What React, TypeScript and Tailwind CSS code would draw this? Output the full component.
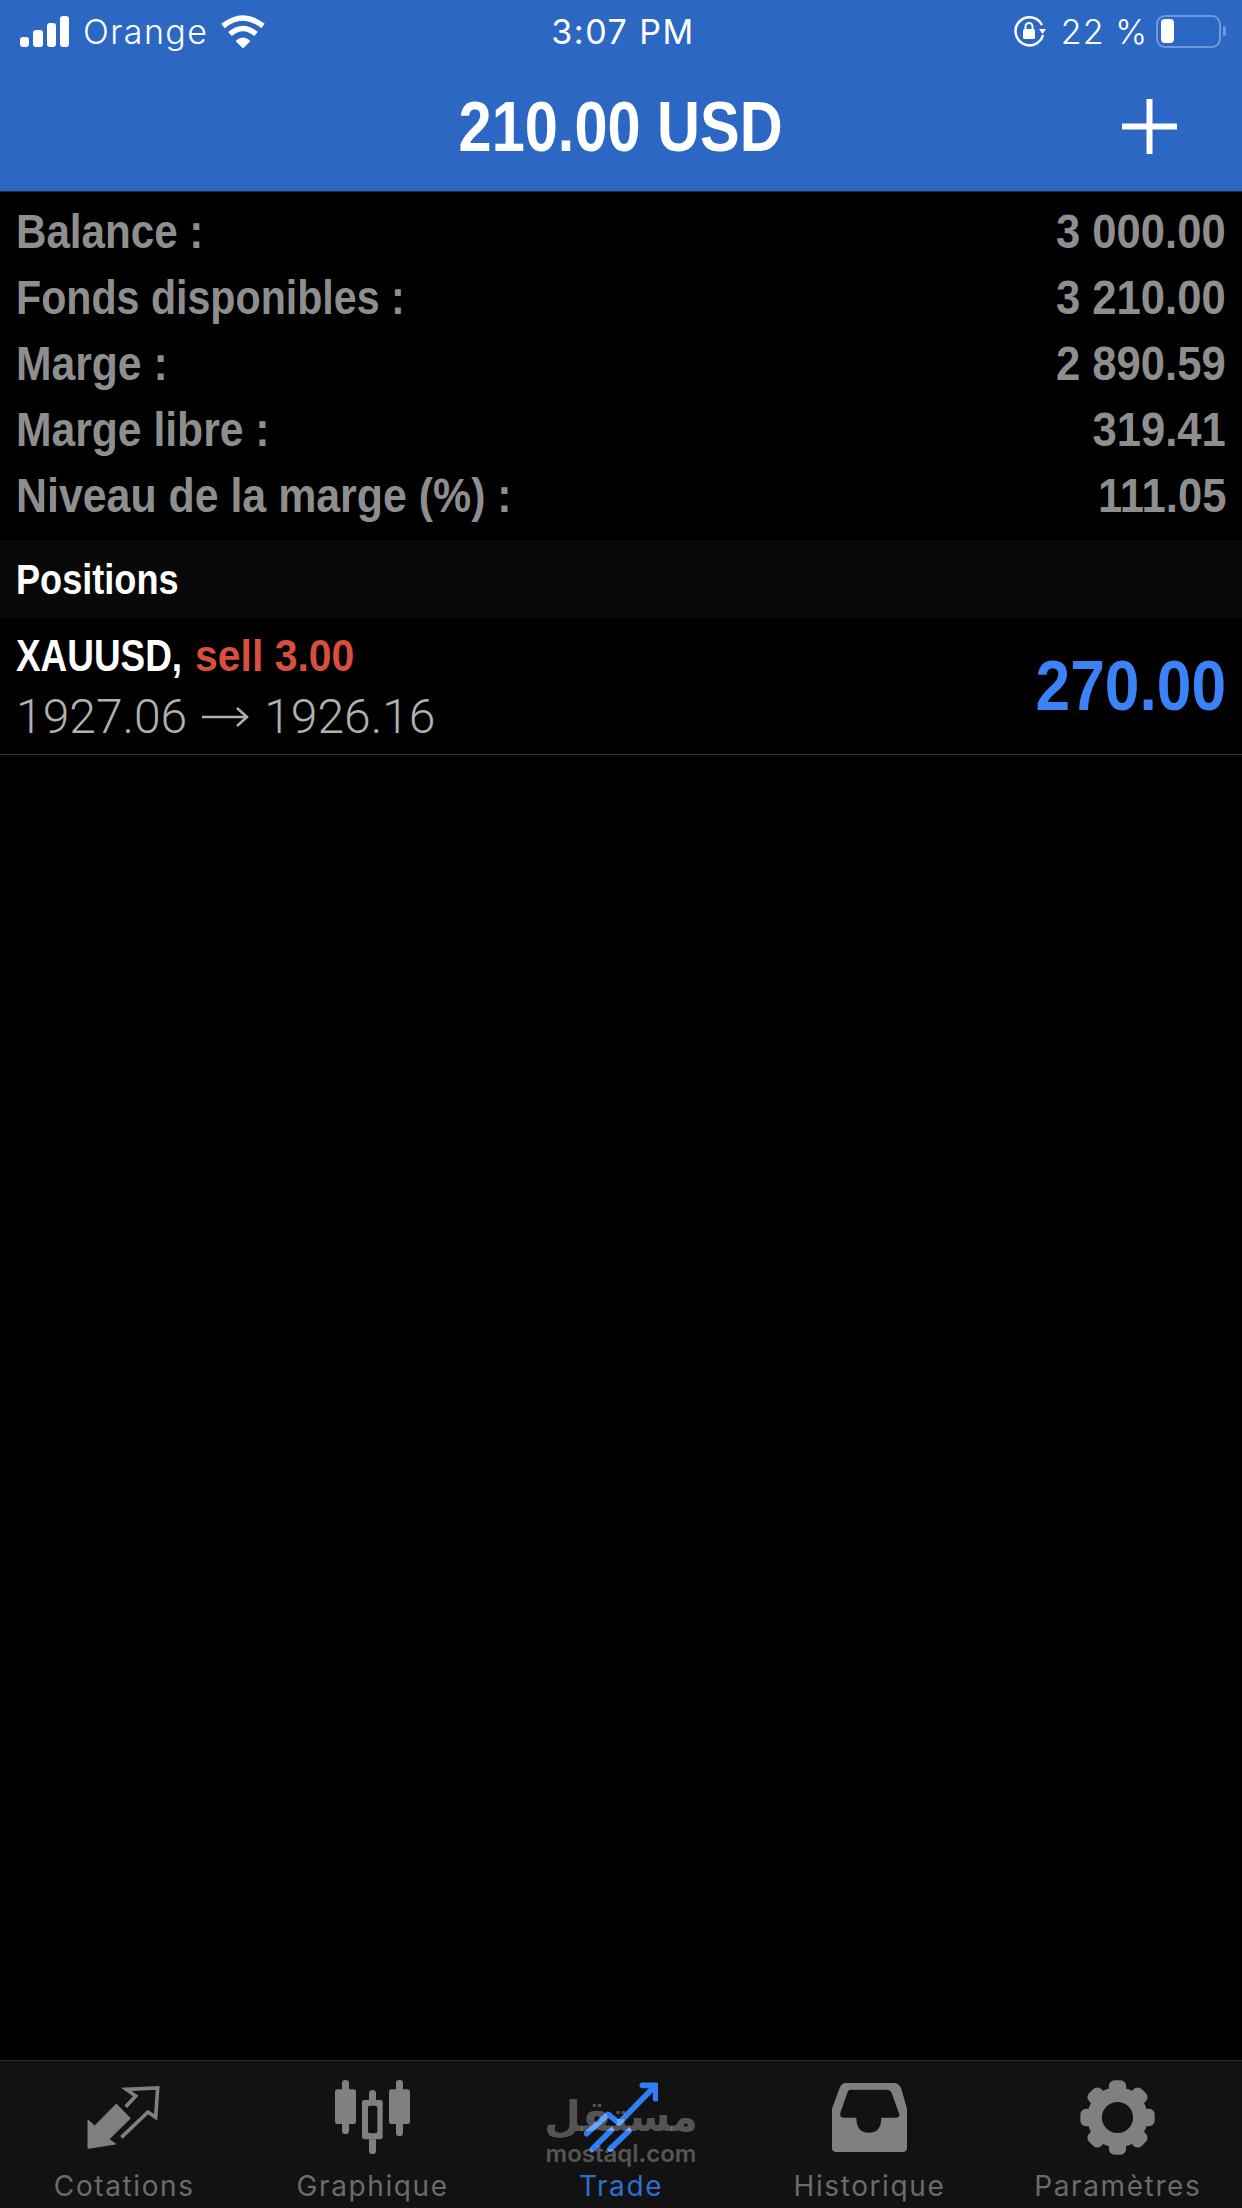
const accountRows = [
  { label: "Balance :", value: "3 000.00", labelClass: "origin-left scale-x-[0.86]" },
  { label: "Fonds disponibles :", value: "3 210.00", labelClass: "origin-left scale-x-[0.84]" },
  { label: "Marge :", value: "2 890.59", labelClass: "origin-left scale-x-[0.87]" },
  { label: "Marge libre :", value: "319.41", labelClass: "origin-left scale-x-[0.87]" },
  { label: "Niveau de la marge (%) :", value: "111.05", labelClass: "origin-left scale-x-[0.875]" },
];

const gearTeeth = [0, 45, 90, 135, 180, 225, 270, 315];

function QuotesIcon() {
  return (
    <svg width="74" height="65" viewBox="262 135 222 195">
      <path d="M265 325V240L285 258L350 192L392 235L328 298L348 312Z" fill="#808080" stroke="#808080" strokeWidth="3" strokeLinejoin="round" />
      <path d="M378 200L408 168L380 148L474 144L468 232L445 216L365 292" fill="none" stroke="#808080" strokeWidth="11" />
    </svg>
  );
}

function ChartIcon() {
  return (
    <svg width="75" height="74" viewBox="1005 120 225 222" fill="#808080">
      <rect x="1026" y="120" width="21" height="162" rx="10" />
      <rect x="1005" y="148" width="63" height="104" rx="7" />
      <rect x="1188" y="120" width="21" height="168" rx="10" />
      <rect x="1167" y="148" width="63" height="104" rx="7" />
      <path d="M1107 180V160Q1107 150 1117.500 150Q1128 150 1128 160V180ZM1107 298H1128V332Q1128 342 1117.500 342Q1107 342 1107 332Z" />
      <path fillRule="evenodd" d="M1093 180H1141Q1148 180 1148 187V291Q1148 298 1141 298H1093Q1086 298 1086 291V187Q1086 180 1093 180ZM1110 197Q1104 197 1104 203V274Q1104 280 1110 280H1126Q1132 280 1132 274V203Q1132 197 1126 197Z" />
    </svg>
  );
}

function TradeIcon() {
  return (
    <svg width="74" height="70" viewBox="310 125 222 210" fill="none" stroke="#2f7ef7" strokeWidth="17" strokeLinecap="round" strokeLinejoin="round">
      <path d="M318 280L382 222L415 248L522 138" />
      <path d="M485 135H525V175" />
      <path d="M335 326L392 270" />
      <path d="M388 326L445 272" />
    </svg>
  );
}

function HistoryIcon() {
  return (
    <svg width="75" height="69" viewBox="210 128 225 207">
      <path
        fill="#808080"
        fillRule="evenodd"
        d="M250 128H395Q412 128 418 145L435 205V322Q435 335 422 335H223Q210 335 210 322V205L232 145Q238 128 250 128ZM265 148Q258 148 255 160L235 218Q232 232 245 232H283Q283 277 320 277Q358 277 358 232H402Q414 232 412 222L390 160Q385 148 375 148Z"
      />
    </svg>
  );
}

function SettingsIcon() {
  return (
    <svg width="75" height="75" viewBox="-113 -113 226 226" fill="#808080">
      <circle r="69" fill="none" stroke="#808080" strokeWidth="44" />
      {gearTeeth.map((deg) => (
        <rect key={deg} x="-26" y="-112" width="52" height="40" rx="17" transform={`rotate(${deg})`} />
      ))}
    </svg>
  );
}

function NavTab({ label, active, children }: { label: string; active?: boolean; children: React.ReactNode }) {
  return (
    <div className="relative flex flex-1 flex-col items-center pt-[16px]">
      <div className="flex h-[80px] items-center justify-center">{children}</div>
      <span
        className={`mt-[11px] text-[28px] leading-[36px] tracking-[1.6px] font-['Inter',sans-serif] ${
          active ? "text-[#2f6fd0]" : "text-[#6b6b6b]"
        }`}
      >
        {label}
      </span>
    </div>
  );
}

export default function App() {
  return (
    <div className="flex h-[2208px] w-[1242px] flex-col overflow-hidden bg-black font-['Liberation_Sans',sans-serif]">
      <header className="h-[192px] border-b border-[#1d2a3f] bg-[#2d67c4] text-white">
        <div className="grid h-[62px] grid-cols-3 items-center pl-[20px] pr-[16px] font-['Inter',sans-serif] text-[34px] font-light">
          <div className="flex items-center">
            <div className="flex h-[32px] items-end gap-[4px]">
              <span className="h-[10px] w-[9px] rounded-[3px] bg-white" />
              <span className="h-[17px] w-[10px] rounded-[3px] bg-white" />
              <span className="h-[24px] w-[9px] rounded-[3px] bg-white" />
              <span className="h-[31px] w-[9px] rounded-[3px] bg-white" />
            </div>
            <span className="ml-[14px] tracking-[1.4px]">Orange</span>
            <svg className="ml-[12px]" width="46" height="34" viewBox="0 0 46 34" fill="none" stroke="white" strokeWidth="5.5">
              <path d="M3 12Q23 -4 43 12" />
              <path d="M10 20Q23 9 36 20" />
              <path d="M17 27Q23 22 29 27L23 33Z" fill="white" stroke="white" strokeWidth="2" strokeLinejoin="round" />
            </svg>
          </div>
          <div className="text-center font-normal tracking-[1.5px]">3:07 PM</div>
          <div className="flex items-center justify-end">
            <svg width="34" height="32" viewBox="0 0 34 32" fill="none">
              <path d="M29 10A14 14 0 1 0 30 20" stroke="white" strokeWidth="2.5" />
              <path d="M26 14H33L29.5 19Z" fill="white" />
              <rect x="10" y="14" width="12" height="10" rx="1.5" fill="white" />
              <path d="M12.5 14V11.5A3.5 3.5 0 0 1 19.500 11.5V14" stroke="white" strokeWidth="2" />
            </svg>
            <span className="ml-[14px] tracking-[1px] whitespace-nowrap">22 %</span>
            <div className="ml-[8px] flex h-[33px] w-[65px] items-center rounded-[9px] border-2 border-[#6f98da] p-[3px]">
              <span className="h-[24px] w-[13px] rounded-[4px] bg-white" />
            </div>
            <span className="ml-[2px] h-[10px] w-[3px] rounded-r-[2px] bg-[#6f98da]" />
          </div>
        </div>
        <div className="grid h-[129px] grid-cols-[1fr_auto_1fr] items-center">
          <div />
          <h1 className="scale-x-[0.85] text-[70px] leading-none font-bold">210.00 USD</h1>
          <div className="flex justify-end pr-[65px]">
            <svg width="55" height="55" viewBox="0 0 55 55" fill="white">
              <rect x="24.5" width="6" height="55" />
              <rect y="24.5" width="55" height="6" />
            </svg>
          </div>
        </div>
      </header>

      <section className="pt-[7px] pb-[11px]">
        {accountRows.map((row) => (
          <div key={row.label} className="flex h-[66px] items-center justify-between px-[16px] text-[49px] font-bold text-[#8e8e8e]">
            <span className={row.labelClass}>{row.label}</span>
            <span className="origin-right scale-x-[0.89]">{row.value}</span>
          </div>
        ))}
      </section>

      <div className="flex h-[78px] items-center bg-[#090909] px-[16px] text-[43px] font-bold text-white">
        <span className="origin-left scale-x-[0.84]">Positions</span>
      </div>

      <div className="flex h-[137px] items-center justify-between border-b border-[#3a3a3a] px-[16px]">
        <div className="flex flex-col">
          <div className="flex text-[45px] leading-[62px] font-bold whitespace-nowrap">
            <span className="origin-left scale-x-[0.82] text-white">XAUUSD,</span>
            <span className="-ml-[24px] origin-left scale-x-[0.91] text-[#d94f3d]">sell 3.00</span>
          </div>
          <div className="flex items-center gap-[15px] font-['Roboto',sans-serif] text-[48px] leading-[60px] font-light text-[#b0b0b0]">
            <span>1927.06</span>
            <svg width="47" height="24" viewBox="0 0 47 24" fill="none" stroke="#b0b0b0" strokeWidth="2.5">
              <path d="M0 12H45" />
              <path d="M35 3L45 12L35 21" />
            </svg>
            <span>1926.16</span>
          </div>
        </div>
        <span className="origin-right scale-x-[0.89] text-[70px] font-bold text-[#3a82f6]">270.00</span>
      </div>

      <div className="flex-1" />

      <nav className="flex h-[148px] border-t border-[#2c2c2c] bg-[#121212]">
        <NavTab label="Cotations">
          <QuotesIcon />
        </NavTab>
        <NavTab label="Graphique">
          <ChartIcon />
        </NavTab>
        <NavTab label="Trade" active>
          <TradeIcon />
          <div className="absolute top-[31px] left-1/2 flex -translate-x-1/2 flex-col items-center text-white/30">
            <span dir="rtl" className="font-['DejaVu_Sans',sans-serif] text-[42px] leading-[50px] font-bold">مستقل</span>
            <span className="font-['Inter',sans-serif] text-[24px] leading-[24px] font-semibold">mostaql.com</span>
          </div>
        </NavTab>
        <NavTab label="Historique">
          <HistoryIcon />
        </NavTab>
        <NavTab label="Paramètres">
          <SettingsIcon />
        </NavTab>
      </nav>
    </div>
  );
}
